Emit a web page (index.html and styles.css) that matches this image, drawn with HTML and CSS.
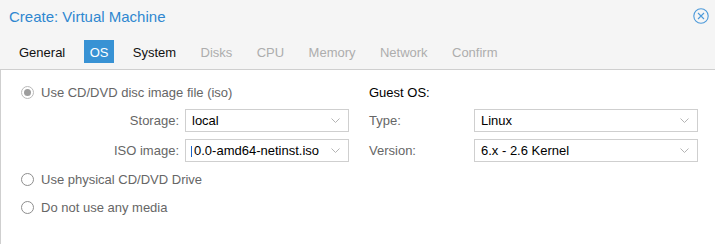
FILE: index.html
```html
<!DOCTYPE html>
<html>
<head>
<meta charset="utf-8">
<link rel="stylesheet" href="styles.css">
</head>
<body>
<div class="win">
  <div class="header">
    <span class="title">Create: Virtual Machine</span>
    <svg class="close" width="16" height="16" viewBox="0 0 16 16">
      <circle cx="8" cy="8" r="7.2" fill="none" stroke="#4d9ada" stroke-width="1.1"/>
      <path d="M5 5 L11 11 M11 5 L5 11" stroke="#4d9ada" stroke-width="1.1"/>
    </svg>
  </div>
  <div class="tabs">
    <span class="tab">General</span>
    <span class="tab active">OS</span>
    <span class="tab">System</span>
    <span class="tab disabled">Disks</span>
    <span class="tab disabled">CPU</span>
    <span class="tab disabled">Memory</span>
    <span class="tab disabled">Network</span>
    <span class="tab disabled">Confirm</span>
  </div>
  <div class="body">
    <div class="col left">
      <div class="radio-row first"><span class="radio checked"></span><span class="rtext">Use CD/DVD disc image file (iso)</span></div>
      <div class="field-row lrow">
        <span class="lbl">Storage:</span>
        <div class="combo"><span class="val">local</span>
          <svg class="chev" width="9" height="5" viewBox="0 0 9 5"><polyline points="0.5,0.5 4.5,4.5 8.5,0.5" fill="none" stroke="#b4b4b4" stroke-width="1"/></svg>
        </div>
      </div>
      <div class="field-row lrow">
        <span class="lbl">ISO image:</span>
        <div class="combo"><span class="val"><span class="cursor"></span>0.0-amd64-netinst.iso</span>
          <svg class="chev" width="9" height="5" viewBox="0 0 9 5"><polyline points="0.5,0.5 4.5,4.5 8.5,0.5" fill="none" stroke="#b4b4b4" stroke-width="1"/></svg>
        </div>
      </div>
      <div class="radio-row"><span class="radio"></span><span class="rtext">Use physical CD/DVD Drive</span></div>
      <div class="radio-row"><span class="radio"></span><span class="rtext">Do not use any media</span></div>
    </div>
    <div class="col right">
      <div class="heading">Guest OS:</div>
      <div class="field-row rrow">
        <span class="lbl left-lbl">Type:</span>
        <div class="combo"><span class="val">Linux</span>
          <svg class="chev" width="9" height="5" viewBox="0 0 9 5"><polyline points="0.5,0.5 4.5,4.5 8.5,0.5" fill="none" stroke="#b4b4b4" stroke-width="1"/></svg>
        </div>
      </div>
      <div class="field-row rrow">
        <span class="lbl left-lbl">Version:</span>
        <div class="combo"><span class="val">6.x - 2.6 Kernel</span>
          <svg class="chev" width="9" height="5" viewBox="0 0 9 5"><polyline points="0.5,0.5 4.5,4.5 8.5,0.5" fill="none" stroke="#b4b4b4" stroke-width="1"/></svg>
        </div>
      </div>
    </div>
  </div>
</div>
</body>
</html>
```
FILE: styles.css
```css
html, body {
  margin: 0;
  padding: 0;
}
body {
  width: 715px;
  height: 244px;
  overflow: hidden;
  background: #f5f5f5;
  font-family: "Liberation Sans", Arial, sans-serif;
  font-size: 13px;
}
.win {
  display: flex;
  flex-direction: column;
  height: 244px;
}
.header {
  height: 32px;
  display: flex;
  justify-content: space-between;
  align-items: center;
  box-sizing: border-box;
}
.title {
  font-size: 15px;
  line-height: 17px;
  color: #2f87d0;
  padding-left: 9px;
  align-self: flex-start;
  padding-top: 8px;
}
.close {
  margin-right: 6px;
}
.tabs {
  height: 38px;
  box-sizing: border-box;
  padding-top: 8px;
  padding-left: 13px;
  display: flex;
  align-items: flex-start;
  gap: 12.4px;
  border-bottom: 1px solid #cfcfcf;
}
.tab {
  padding: 5px 6px 3px 6px;
  line-height: 15px;
  color: #111;
}
.tab.active {
  background: #3892d4;
  color: #fff;
}
.tab.disabled {
  color: #adadad;
}
.body {
  flex: 1;
  background: #fff;
  border-left: 1px solid #cfcfcf;
  padding: 12px 0 0 20px;
  display: flex;
  gap: 20px;
}
.col {
  display: flex;
  flex-direction: column;
}
.col.left { width: 328px; }
.col.right { width: 329px; }
.radio-row {
  height: 22px;
  display: flex;
  align-items: center;
  line-height: 22px;
  color: #666;
  margin-bottom: 6px;
}
.radio-row.first {
  margin-bottom: 5px;
}
.radio {
  width: 13px;
  height: 13px;
  box-sizing: border-box;
  border: 1px solid #8e8e8e;
  border-radius: 50%;
  background: #fff;
  margin-right: 7px;
  position: relative;
  flex: none;
  margin-top: -1px;
}
.radio.checked {
  border-color: #b9b9b9;
}
.radio.checked::after {
  content: "";
  position: absolute;
  left: 2px;
  top: 2px;
  width: 7px;
  height: 7px;
  border-radius: 50%;
  background: #9d9d9d;
}
.heading {
  height: 22px;
  line-height: 22px;
  color: #000;
  margin-bottom: 5px;
}
.field-row {
  display: grid;
  align-items: center;
  height: 23px;
  margin-bottom: 7px;
}
.field-row.lrow {
  grid-template-columns: 158px 164px;
  column-gap: 6px;
}
.field-row.rrow {
  grid-template-columns: 105px 224px;
}
.lbl {
  color: #666;
  text-align: right;
  line-height: 20px;
  padding-top: 1px;
}
.lbl.left-lbl {
  text-align: left;
}
.combo {
  height: 23px;
  box-sizing: border-box;
  border: 1px solid #cfcfcf;
  background: #fff;
  display: flex;
  align-items: center;
  justify-content: space-between;
  padding: 0 8px 0 6px;
  overflow: hidden;
}
.val {
  color: #000;
  line-height: 20px;
  padding-top: 1px;
  display: flex;
  align-items: center;
  white-space: nowrap;
}
.cursor {
  display: inline-block;
  width: 1px;
  height: 11px;
  background: #1a63c9;
  margin-left: -1px;
  margin-right: 2px;
}
.chev {
  flex: none;
  margin-top: -1px;
}
```
